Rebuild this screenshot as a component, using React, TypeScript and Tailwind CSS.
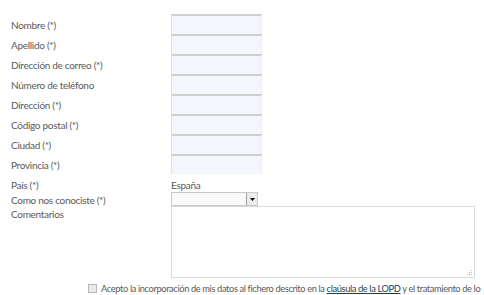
import React from "react";

const labels = [
  "Nombre (*)",
  "Apellido (*)",
  "Dirección de correo (*)",
  "Número de teléfono",
  "Dirección (*)",
  "Código postal (*)",
  "Ciudad (*)",
  "Provincia (*)",
];

export default function App() {
  return (
    <div
      className="w-[484px] h-[295px] overflow-hidden bg-white text-[10px] tracking-[-0.3px] text-[#5a5a5a] relative"
      style={{ fontFamily: "Lato, 'Open Sans', sans-serif" }}
    >
      <div className="pt-[14px] pl-[11px]">
        {labels.map((l) => (
          <div key={l} className="flex h-[20px] items-start">
            <div className="w-[160px] leading-none pt-[6px]">{l}</div>
            <div className="w-[91px] h-[20px] bg-[#f3f6fa] border-t-2 border-t-[#cfcfcf] border-l border-l-[#e2e2e2] border-r border-r-[#eeeeee]" />
          </div>
        ))}
        <div className="flex h-[18px] items-start leading-none pt-[6px]">
          <div className="w-[160px]">País (*)</div>
          <div>España</div>
        </div>
        <div className="flex h-[14px] items-center">
          <div className="w-[160px] leading-none pt-[1px]">Como nos conociste (*)</div>
          <div className="w-[87px] h-[14px] border border-[#c9c9c9] bg-[#fafafa] flex justify-end items-center">
            <div className="w-[11px] h-[12px] border-l border-[#a0a0a0] bg-[#ececec] flex items-center justify-center">
              <svg width="5" height="3" viewBox="0 0 5 3"><path d="M0 0h5L2.5 3z" fill="#000" /></svg>
            </div>
          </div>
        </div>
        <div className="flex">
          <div className="w-[160px] leading-none pt-[3px]">Comentarios</div>
          <div className="w-[304px] h-[72px] border border-[#dadada] bg-white relative">
            <svg className="absolute right-[1px] bottom-[1px]" width="6" height="6" viewBox="0 0 6 6">
              <g fill="#bbb">
                <rect x="4" y="0" width="1" height="1" />
                <rect x="2" y="2" width="1" height="1" />
                <rect x="4" y="2" width="1" height="1" />
                <rect x="0" y="4" width="1" height="1" />
                <rect x="2" y="4" width="1" height="1" />
                <rect x="4" y="4" width="1" height="1" />
              </g>
            </svg>
          </div>
        </div>
        <div className="flex items-center pl-[77px] pt-[4px] whitespace-nowrap text-[9.3px] tracking-[-0.38px]">
          <div className="w-[9px] h-[9px] border border-[#b8b8b8] bg-[#e9e9e9] mr-[4px] shrink-0" />
          <span>
            Acepto la incorporación de mis datos al fichero descrito en la{" "}
            <span className="text-[#1f3a6b] underline">claúsula de la LOPD</span> y el tratamiento de lo
          </span>
        </div>
      </div>
    </div>
  );
}
